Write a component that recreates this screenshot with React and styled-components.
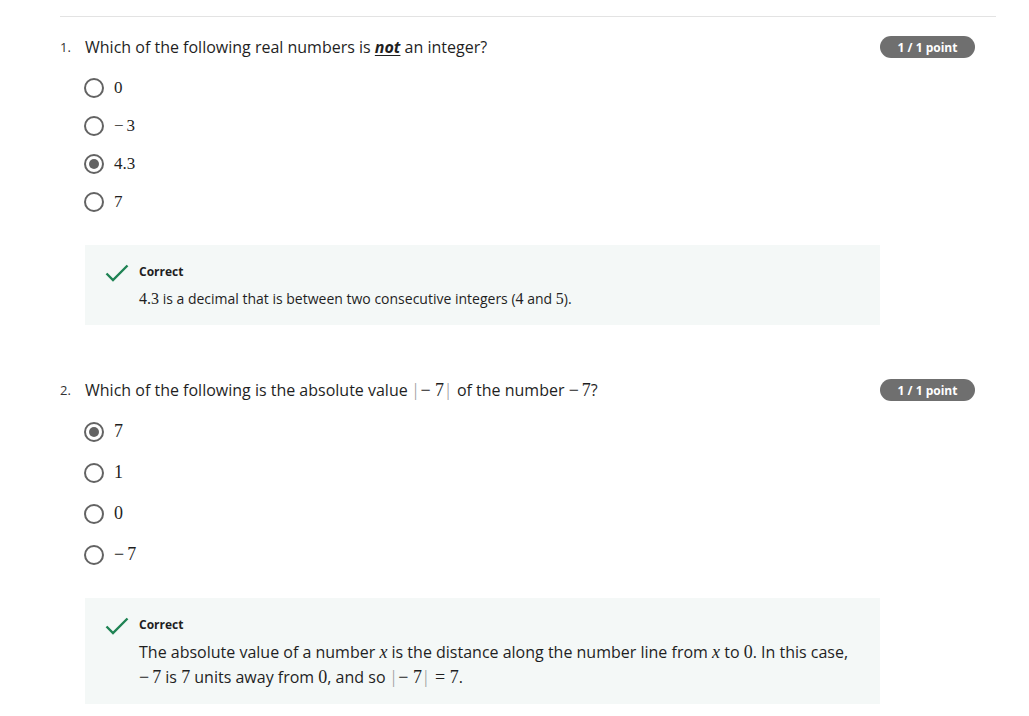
import React from "react";
import styled, { createGlobalStyle } from "styled-components";

const Global = createGlobalStyle`
  body {
    margin: 0;
    background: #ffffff;
    font-family: "Open Sans", "Noto Sans", sans-serif;
    color: #1f1f1f;
  }
`;

const Page = styled.div`
  padding-top: 16px;
  padding-left: 60px;
  width: 936px;
`;

const Divider = styled.div`
  height: 1px;
  background: #e3e3e3;
`;

const Question = styled.section`
  display: flex;
  flex-direction: column;
  margin-top: ${(p) => p.$top}px;
`;

const Prompt = styled.div`
  display: flex;
  align-items: center;
  height: 22px;
  padding-right: 21px;
`;

const QNumber = styled.span`
  width: 25px;
  font-size: 13px;
  color: #333;
`;

const PromptText = styled.span`
  flex: 1;
  font-size: 16px;
  color: #1f1f1f;

  em {
    font-weight: 700;
    text-decoration: underline;
    text-underline-offset: 2px;
  }
`;

const Badge = styled.span`
  display: inline-flex;
  align-items: center;
  justify-content: center;
  width: 95px;
  height: 22px;
  border-radius: 11px;
  background: #6f6f6f;
  color: #fff;
  font-size: 12px;
  font-weight: 700;
`;

const Options = styled.ul`
  list-style: none;
  margin: ${(p) => p.$top}px 0 0;
  padding: 0 0 0 24px;
`;

const Option = styled.li`
  display: flex;
  align-items: center;
  gap: 10px;
  height: ${(p) => p.$h}px;
`;

const Radio = styled.span`
  box-sizing: border-box;
  width: 20px;
  height: 20px;
  border-radius: 50%;
  border: 2px solid #636363;
  display: flex;
  align-items: center;
  justify-content: center;

  &::after {
    content: "";
    width: 10px;
    height: 10px;
    border-radius: 50%;
    background: ${(p) => (p.$checked ? "#636363" : "transparent")};
  }
`;

const Tex = styled.span`
  font-family: "Liberation Serif", "DejaVu Serif", serif;
  font-size: ${(p) => p.$size || 17}px;
  color: #1f1f1f;
  white-space: nowrap;

  i {
    font-style: italic;
  }
`;

const Bar = styled.span`
  color: #a0a0a0;
  margin: 0 3px 0 2px;
`;

const Feedback = styled.div`
  display: flex;
  gap: 10px;
  width: 795px;
  box-sizing: border-box;
  margin: ${(p) => p.$top}px 0 0 25px;
  padding: 18px 20px ${(p) => p.$bottom}px 20px;
  background: #f4f8f7;
`;

const Check = styled.svg`
  flex: none;
  width: 24px;
  height: 18px;
  margin-top: 1px;
`;

const FeedbackBody = styled.div`
  display: flex;
  flex-direction: column;
  gap: ${(p) => p.$gap}px;
`;

const Label = styled.div`
  font-size: 12px;
  font-weight: 700;
  line-height: 18px;
  color: #1f1f1f;
`;

const Explanation = styled.div`
  font-size: ${(p) => p.$size}px;
  line-height: ${(p) => p.$lh}px;
  color: #1f1f1f;
`;

const CheckIcon = () => (
  <Check viewBox="0 0 24 18" fill="none">
    <path d="M1.5 9.5 L8 16 L22.5 1.5" stroke="#1f8354" strokeWidth="2.4" />
  </Check>
);

// unary minus with a thin gap, as the math renderer draws it
const NEG7 = "−\u20067";
const NEG3 = "−\u20063";

const AbsSeven = ({ size, tail }) => (
  <Tex $size={size}>
    <Bar>|</Bar>− 7<Bar>|</Bar>
    {tail}
  </Tex>
);

export default function App() {
  return (
    <Page>
      <Global />
      <Divider />

      <Question $top={19}>
        <Prompt>
          <QNumber>1.</QNumber>
          <PromptText>
            Which of the following real numbers is <em>not</em> an integer?
          </PromptText>
          <Badge>1 / 1 point</Badge>
        </Prompt>
        <Options $top={11}>
          {["0", NEG3, "4.3", "7"].map((v) => (
            <Option key={v} $h={38}>
              <Radio $checked={v === "4.3"} />
              <Tex>{v}</Tex>
            </Option>
          ))}
        </Options>
        <Feedback $top={24} $bottom={16}>
          <CheckIcon />
          <FeedbackBody $gap={8}>
            <Label>Correct</Label>
            <Explanation $size={14} $lh={20}>
              <Tex $size={16}>4.3</Tex> is a decimal that is between two consecutive
              integers (<Tex $size={16}>4</Tex> and <Tex $size={16}>5</Tex>).
            </Explanation>
          </FeedbackBody>
        </Feedback>
      </Question>

      <Question $top={54}>
        <Prompt>
          <QNumber>2.</QNumber>
          <PromptText>
            Which of the following is the absolute value <AbsSeven size={18} /> of the
            number <Tex $size={18}>{NEG7}</Tex>?
          </PromptText>
          <Badge>1 / 1 point</Badge>
        </Prompt>
        <Options $top={10}>
          {["7", "1", "0", NEG7].map((v) => (
            <Option key={v} $h={41}>
              <Radio $checked={v === "7"} />
              <Tex $size={18}>{v}</Tex>
            </Option>
          ))}
        </Options>
        <Feedback $top={23} $bottom={14}>
          <CheckIcon />
          <FeedbackBody $gap={6}>
            <Label>Correct</Label>
            <Explanation $size={16} $lh={25}>
              The absolute value of a number <Tex $size={18}><i>x</i></Tex> is the distance
              along the number line from <Tex $size={18}><i>x</i></Tex> to{" "}
              <Tex $size={18}>0</Tex>. In this case, <Tex $size={18}>{NEG7}</Tex> is{" "}
              <Tex $size={18}>7</Tex> units away from <Tex $size={18}>0</Tex>, and so{" "}
              <AbsSeven size={18} tail=" = 7" />.
            </Explanation>
          </FeedbackBody>
        </Feedback>
      </Question>
    </Page>
  );
}
